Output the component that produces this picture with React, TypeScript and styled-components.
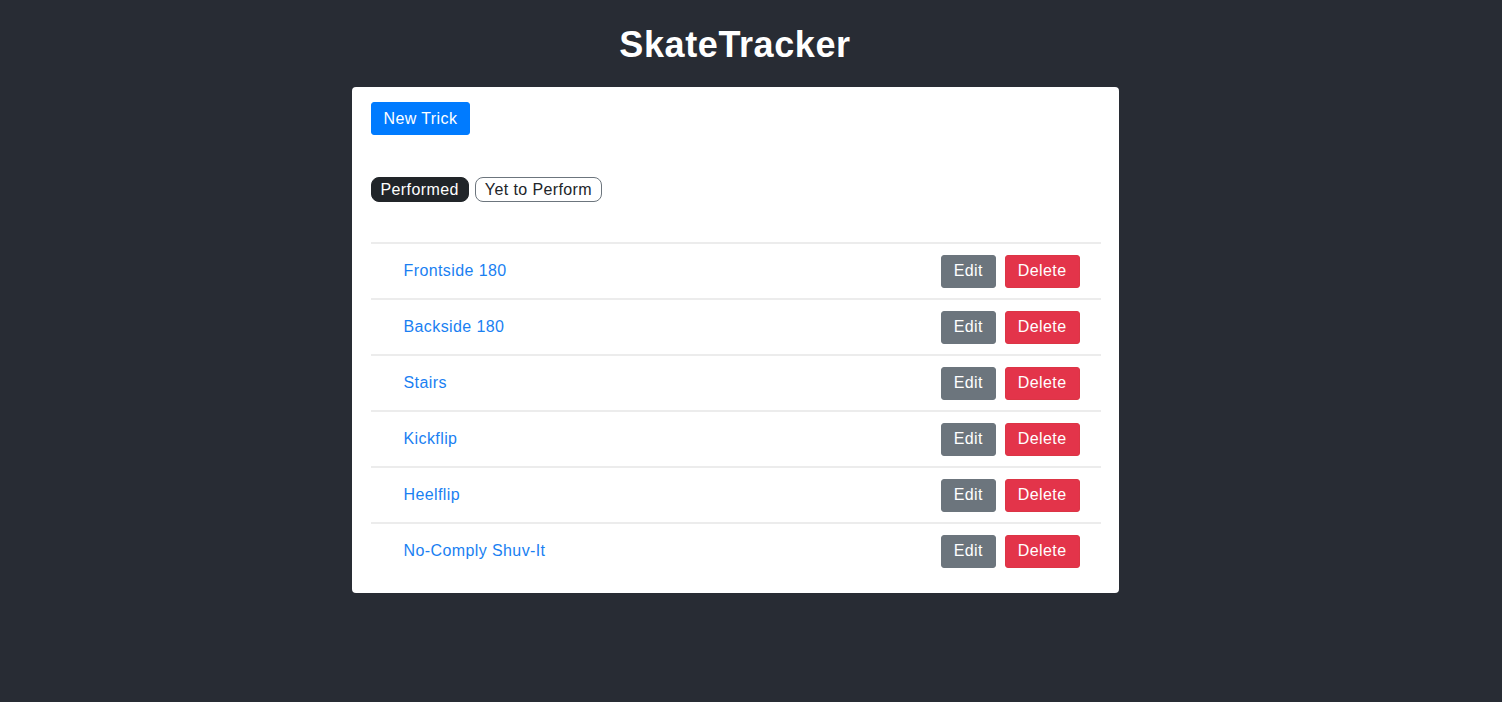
import React, { useState } from "react";
import styled, { createGlobalStyle } from "styled-components";

const GlobalStyle = createGlobalStyle`
  body {
    margin: 0;
    background: #282c34;
    font-family: "Liberation Sans", Arial, sans-serif;
  }
`;

const Page = styled.div`
  min-height: 702px;
  box-sizing: border-box;
  padding-right: 32px;
  display: flex;
  flex-direction: column;
  align-items: center;
`;

const Title = styled.h1`
  margin: 25px 0 0;
  height: 62px;
  color: #ffffff;
  font-size: 36px;
  font-weight: 700;
  letter-spacing: 0.6px;
  line-height: 40px;
`;

const Card = styled.div`
  width: 767px;
  box-sizing: border-box;
  background: #ffffff;
  border-radius: 4px;
  padding: 15px 18px 15px 19px;
`;

const Button = styled.button<{ $variant: "primary" | "secondary" | "danger" }>`
  border: 1px solid
    ${(p) => (p.$variant === "primary" ? "#007bff" : p.$variant === "secondary" ? "#6c757d" : "#dc3545")};
  background: ${(p) => (p.$variant === "primary" ? "#007bff" : p.$variant === "secondary" ? "#6c757d" : "#e3344a")};
  color: #ffffff;
  font-family: "Liberation Sans", Arial, sans-serif;
  font-size: 16px;
  letter-spacing: 0.4px;
  height: 33px;
  padding: 0 12px;
  border-radius: 3px;
  cursor: pointer;
`;

const Filters = styled.div`
  display: flex;
  gap: 6px;
  margin-top: 42px;
`;

const Pill = styled.button<{ $active: boolean }>`
  height: 25px;
  padding: 0 9px;
  border-radius: 8px;
  font-family: "Liberation Sans", Arial, sans-serif;
  font-size: 16px;
  letter-spacing: 0.4px;
  border: 1px solid ${(p) => (p.$active ? "#212529" : "#6c757d")};
  background: ${(p) => (p.$active ? "#212529" : "#ffffff")};
  color: ${(p) => (p.$active ? "#ffffff" : "#212529")};
  cursor: pointer;
`;

const List = styled.ul`
  list-style: none;
  margin: 40px 0 0;
  padding: 0;
`;

const Row = styled.li`
  display: flex;
  align-items: center;
  justify-content: space-between;
  height: 56px;
  box-sizing: border-box;
  border-top: 2px solid #ececec;
  padding: 0 21px 0 33px;
`;

const TrickLink = styled.a`
  color: #1a7ff2;
  font-size: 16px;
  letter-spacing: 0.4px;
  text-decoration: none;
  cursor: pointer;
`;

const Actions = styled.div`
  display: flex;
  gap: 9px;
`;

const tricks = ["Frontside 180", "Backside 180", "Stairs", "Kickflip", "Heelflip", "No-Comply Shuv-It"];

export default function App() {
  const [performed, setPerformed] = useState(true);
  return (
    <>
      <GlobalStyle />
      <Page>
        <Title>SkateTracker</Title>
        <Card>
          <Button $variant="primary">New Trick</Button>
          <Filters>
            <Pill $active={performed} onClick={() => setPerformed(true)}>
              Performed
            </Pill>
            <Pill $active={!performed} onClick={() => setPerformed(false)}>
              Yet to Perform
            </Pill>
          </Filters>
          <List>
            {tricks.map((t) => (
              <Row key={t}>
                <TrickLink>{t}</TrickLink>
                <Actions>
                  <Button $variant="secondary">Edit</Button>
                  <Button $variant="danger">Delete</Button>
                </Actions>
              </Row>
            ))}
          </List>
        </Card>
      </Page>
    </>
  );
}
